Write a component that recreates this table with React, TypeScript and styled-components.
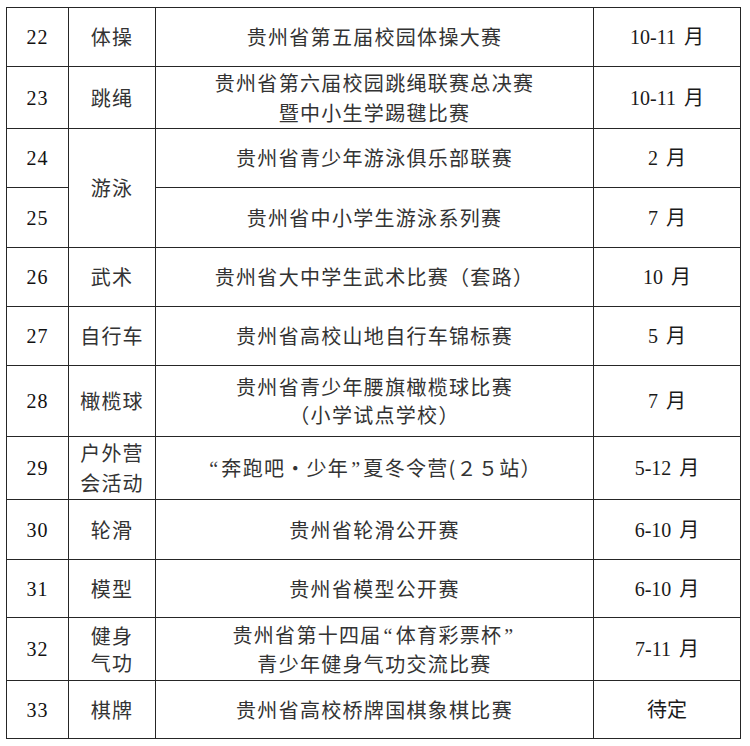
import React from "react";
import styled, { createGlobalStyle } from "styled-components";

const Global = createGlobalStyle`
  html, body { margin: 0; padding: 0; background: #ffffff; }
  #root { width: 750px; height: 746px; }
`;

const Page = styled.div`
  width: 750px;
  height: 746px;
  padding: 7px 0 0 6px;
  box-sizing: border-box;
  background: #ffffff;
`;

const Table = styled.table`
  border-collapse: collapse;
  table-layout: fixed;
  width: 734px;
  color: #1a1a1a;
`;

const Col = styled.col<{ $w: number }>`
  width: ${(p) => p.$w}px;
`;

const Row = styled.tr<{ $h: number }>`
  height: ${(p) => p.$h}px;
`;

const Cell = styled.td<{ $lh?: number }>`
  border: 1px solid #262626;
  padding: 0;
  text-align: center;
  vertical-align: middle;
  font-size: 20px;
  line-height: ${(p) => p.$lh ?? 30}px;
`;

const NumCell = styled(Cell)`
  font-family: "Liberation Serif", "Noto Sans CJK SC", serif;
  letter-spacing: 1px;
  color: #111111;
`;

const SportCell = styled(Cell)`
  font-family: "Noto Sans CJK SC", "Liberation Serif", sans-serif;
  letter-spacing: 1.2px;
  color: #333333;
`;

const EventCell = styled(Cell)`
  font-family: "Noto Sans CJK SC", "Liberation Serif", sans-serif;
  letter-spacing: 1.3px;
  color: #333333;
`;

const MonthCell = styled(Cell)`
  font-family: "Liberation Serif", "Noto Sans CJK SC", serif;
  word-spacing: 3px;
  color: #1a1a1a;
`;

const Line = styled.div`
  white-space: nowrap;
`;

const Quote = styled.span`
  font-family: "Liberation Serif", serif;
  padding: 0 2px;
`;

type Item = {
  no: number;
  sport?: string[];
  span?: number;
  event: string[];
  month: string;
  h: number;
  lh?: number;
};

const items: Item[] = [
  { no: 22, sport: ["体操"], event: ["贵州省第五届校园体操大赛"], month: "10-11 月", h: 59 },
  { no: 23, sport: ["跳绳"], event: ["贵州省第六届校园跳绳联赛总决赛", "暨中小生学踢毽比赛"], month: "10-11 月", h: 62 },
  { no: 24, sport: ["游泳"], span: 2, event: ["贵州省青少年游泳俱乐部联赛"], month: "2 月", h: 59 },
  { no: 25, event: ["贵州省中小学生游泳系列赛"], month: "7 月", h: 60 },
  { no: 26, sport: ["武术"], event: ["贵州省大中学生武术比赛（套路）"], month: "10 月", h: 59 },
  { no: 27, sport: ["自行车"], event: ["贵州省高校山地自行车锦标赛"], month: "5 月", h: 59 },
  { no: 28, sport: ["橄榄球"], event: ["贵州省青少年腰旗橄榄球比赛", "（小学试点学校）"], month: "7 月", h: 71, lh: 28 },
  { no: 29, sport: ["户外营", "会活动"], event: ["“奔跑吧・少年”夏冬令营(２５站）"], month: "5-12 月", h: 63 },
  { no: 30, sport: ["轮滑"], event: ["贵州省轮滑公开赛"], month: "6-10 月", h: 60 },
  { no: 31, sport: ["模型"], event: ["贵州省模型公开赛"], month: "6-10 月", h: 58 },
  { no: 32, sport: ["健身", "气功"], event: ["贵州省第十四届“体育彩票杯”", "青少年健身气功交流比赛"], month: "7-11 月", h: 63, lh: 27 },
  { no: 33, sport: ["棋牌"], event: ["贵州省高校桥牌国棋象棋比赛"], month: "待定", h: 58 },
];

function renderText(text: string) {
  return text.split(/([“”])/).map((part, i) =>
    part === "“" || part === "”" ? <Quote key={i}>{part}</Quote> : <React.Fragment key={i}>{part}</React.Fragment>
  );
}

export default function App() {
  return (
    <Page>
      <Global />
      <Table>
        <colgroup>
          <Col $w={62} />
          <Col $w={87} />
          <Col $w={438} />
          <Col $w={147} />
        </colgroup>
        <tbody>
          {items.map((it) => (
            <Row key={it.no} $h={it.h}>
              <NumCell>{it.no}</NumCell>
              {it.sport && (
                <SportCell rowSpan={it.span ?? 1} $lh={it.lh ?? 30}>
                  {it.sport.map((s) => (
                    <Line key={s}>{s}</Line>
                  ))}
                </SportCell>
              )}
              <EventCell $lh={it.lh}>
                {it.event.map((e) => (
                  <Line key={e}>{renderText(e)}</Line>
                ))}
              </EventCell>
              <MonthCell>{it.month}</MonthCell>
            </Row>
          ))}
        </tbody>
      </Table>
    </Page>
  );
}
